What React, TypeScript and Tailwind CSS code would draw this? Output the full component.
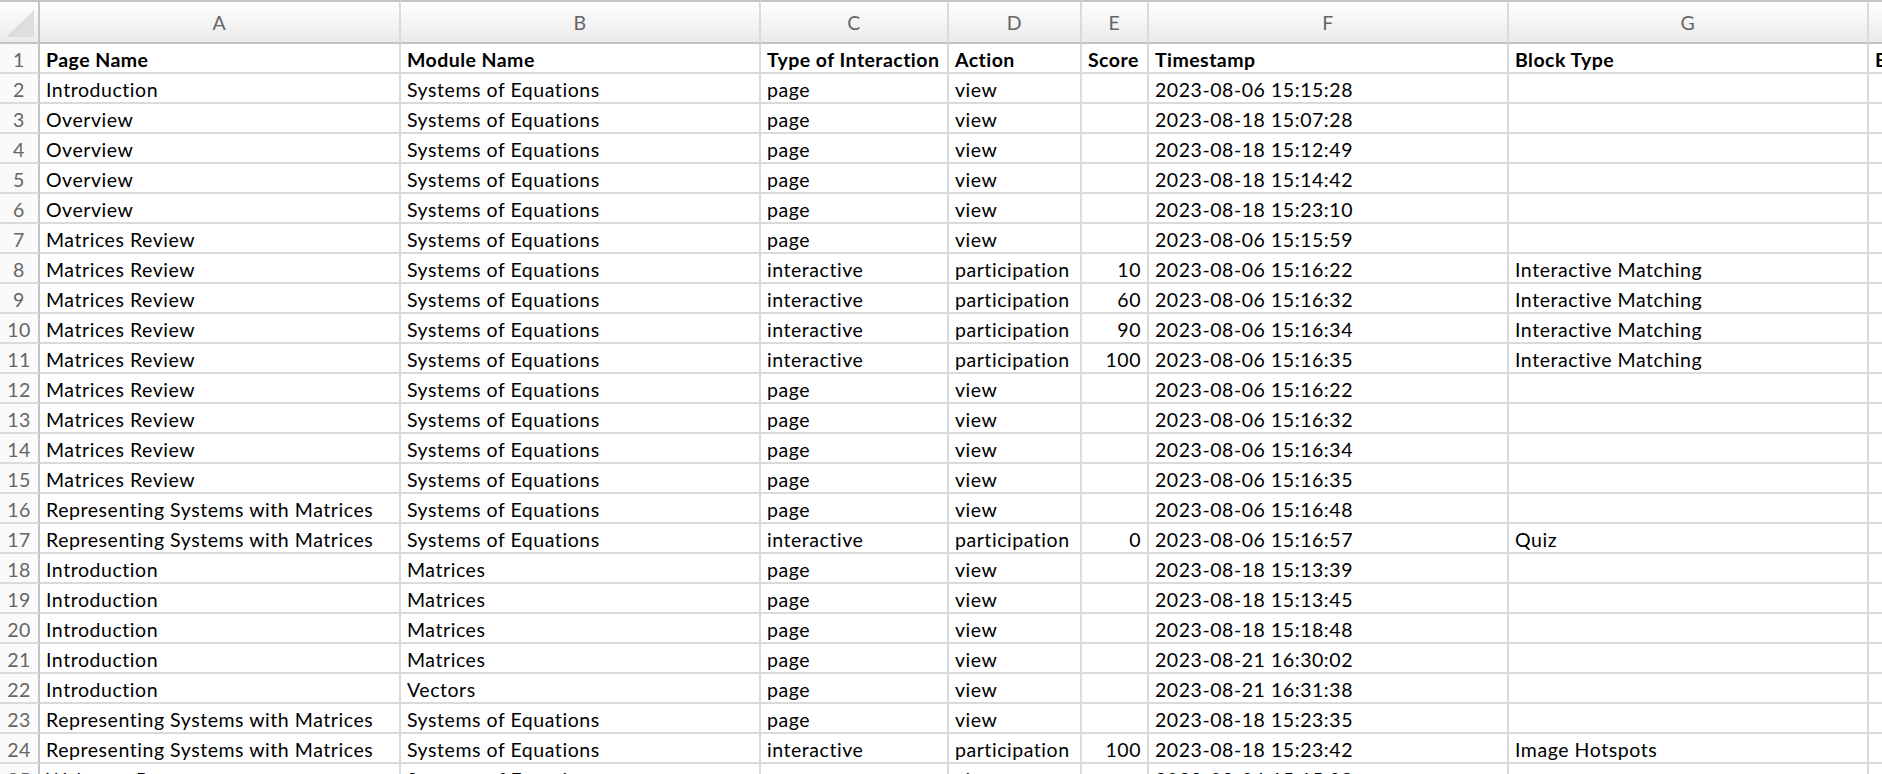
const columns = ["A", "B", "C", "D", "E", "F", "G", "H"];

type Row = [string, string, string, string, string, string, string, string];

const rows: Row[] = [
  ["Page Name", "Module Name", "Type of Interaction", "Action", "Score", "Timestamp", "Block Type", "B"],
  ["Introduction", "Systems of Equations", "page", "view", "", "2023-08-06 15:15:28", "", ""],
  ["Overview", "Systems of Equations", "page", "view", "", "2023-08-18 15:07:28", "", ""],
  ["Overview", "Systems of Equations", "page", "view", "", "2023-08-18 15:12:49", "", ""],
  ["Overview", "Systems of Equations", "page", "view", "", "2023-08-18 15:14:42", "", ""],
  ["Overview", "Systems of Equations", "page", "view", "", "2023-08-18 15:23:10", "", ""],
  ["Matrices Review", "Systems of Equations", "page", "view", "", "2023-08-06 15:15:59", "", ""],
  ["Matrices Review", "Systems of Equations", "interactive", "participation", "10", "2023-08-06 15:16:22", "Interactive Matching", ""],
  ["Matrices Review", "Systems of Equations", "interactive", "participation", "60", "2023-08-06 15:16:32", "Interactive Matching", ""],
  ["Matrices Review", "Systems of Equations", "interactive", "participation", "90", "2023-08-06 15:16:34", "Interactive Matching", ""],
  ["Matrices Review", "Systems of Equations", "interactive", "participation", "100", "2023-08-06 15:16:35", "Interactive Matching", ""],
  ["Matrices Review", "Systems of Equations", "page", "view", "", "2023-08-06 15:16:22", "", ""],
  ["Matrices Review", "Systems of Equations", "page", "view", "", "2023-08-06 15:16:32", "", ""],
  ["Matrices Review", "Systems of Equations", "page", "view", "", "2023-08-06 15:16:34", "", ""],
  ["Matrices Review", "Systems of Equations", "page", "view", "", "2023-08-06 15:16:35", "", ""],
  ["Representing Systems with Matrices", "Systems of Equations", "page", "view", "", "2023-08-06 15:16:48", "", ""],
  ["Representing Systems with Matrices", "Systems of Equations", "interactive", "participation", "0", "2023-08-06 15:16:57", "Quiz", ""],
  ["Introduction", "Matrices", "page", "view", "", "2023-08-18 15:13:39", "", ""],
  ["Introduction", "Matrices", "page", "view", "", "2023-08-18 15:13:45", "", ""],
  ["Introduction", "Matrices", "page", "view", "", "2023-08-18 15:18:48", "", ""],
  ["Introduction", "Matrices", "page", "view", "", "2023-08-21 16:30:02", "", ""],
  ["Introduction", "Vectors", "page", "view", "", "2023-08-21 16:31:38", "", ""],
  ["Representing Systems with Matrices", "Systems of Equations", "page", "view", "", "2023-08-18 15:23:35", "", ""],
  ["Representing Systems with Matrices", "Systems of Equations", "interactive", "participation", "100", "2023-08-18 15:23:42", "Image Hotspots", ""],
  ["Welcome Page", "Systems of Equations", "page", "view", "", "2023-08-06 15:15:08", "", ""],
];

export default function App() {
  return (
    <div
      className="h-[774px] w-[1882px] overflow-hidden bg-white text-[19.5px] tracking-[0.55px] text-black"
      style={{ fontFamily: "Lato, 'Open Sans', sans-serif" }}
    >
      <div className="grid w-max grid-cols-[40px_361px_360px_188px_133px_67px_360px_360px_200px]">
        {/* column letters */}
        <div className="flex h-[44px] items-center justify-center border-t-2 border-r-2 border-b-2 border-[#c4c4c4] bg-linear-to-b from-white to-[#ebebeb]">
          <svg width="32" height="32" viewBox="0 0 32 32" className="mt-[2px]">
            <polygon points="3,30 31,30 31,3" fill="#dedede" />
          </svg>
        </div>
        {columns.map((c) => (
          <div
            key={c}
            className="flex h-[44px] items-center justify-center border-t-2 border-r-2 border-b-2 border-t-[#c4c4c4] border-r-[#dadada] border-b-[#c4c4c4] bg-linear-to-b from-white to-[#ebebeb] pt-[1px] text-[#666]"
          >
            {c}
          </div>
        ))}

        {rows.map((row, i) => (
          <>
            <div
              key={`n${i}`}
              className="flex h-[30px] items-center justify-center border-r-2 border-b-2 border-r-[#c4c4c4] border-b-[#dadada] bg-[#fafafa] pt-[3px] text-[#666]"
            >
              {i + 1}
            </div>
            {row.map((cell, j) => (
              <div
                key={`c${i}-${j}`}
                className={`flex h-[30px] items-center overflow-hidden whitespace-nowrap border-r-2 border-b-2 border-[#dadada] px-[6px] pt-[3px] ${
                  j === 4 && i > 0 ? "justify-end" : ""
                } ${i === 0 ? "font-bold tracking-[0.45px]" : ""}`}
              >
                {cell}
              </div>
            ))}
          </>
        ))}
      </div>
    </div>
  );
}
